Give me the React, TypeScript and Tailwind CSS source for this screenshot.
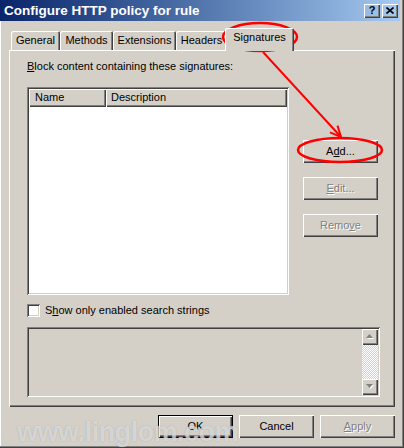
import React from "react";

const raised =
  "shadow-[inset_1px_1px_#ffffff,inset_-1px_-1px_#404040,inset_-2px_-2px_#808080]";
const sunken =
  "shadow-[inset_1px_1px_#808080,inset_-1px_-1px_#ffffff,inset_2px_2px_#404040,inset_-2px_-2px_#d4d0c8]";
const dimText = "text-[#808080] [text-shadow:1px_1px_0_#ffffff]";

function Btn({
  children,
  disabled,
  isDefault,
}: {
  children: React.ReactNode;
  disabled?: boolean;
  isDefault?: boolean;
}) {
  if (isDefault) {
    return (
      <div className="w-[75px] h-[23px] border border-black">
        <div className={`w-full h-full flex items-center justify-center ${raised}`}>{children}</div>
      </div>
    );
  }
  return (
    <div
      className={`w-[75px] h-[23px] flex items-center justify-center ${raised} ${disabled ? dimText : ""}`}
    >
      {children}
    </div>
  );
}

function Tab({ label, w, selected }: { label: string; w: string; selected?: boolean }) {
  if (selected) {
    return (
      <div
        className={`${w} h-[23px] -mb-px -ml-[2px] relative z-10 bg-[#d4d0c8] pt-[3px] text-center rounded-t-[2px] shadow-[inset_1px_1px_#ffffff,inset_-1px_0_#404040,inset_-2px_0_#808080]`}
      >
        {label}
      </div>
    );
  }
  return (
    <div
      className={`${w} h-[19px] pt-[3px] text-center rounded-t-[2px] shadow-[inset_1px_1px_#ffffff,inset_-1px_0_#404040,inset_-2px_0_#808080]`}
    >
      {label}
    </div>
  );
}

function Arrow({ up }: { up?: boolean }) {
  return (
    <div className={`w-[16px] h-[16px] flex items-center justify-center ${raised}`}>
      <svg width="8" height="6" viewBox="0 0 8 6">
        {up ? (
          <>
            <path d="M4.5 1 L8 5 L1 5 Z" fill="#ffffff" />
            <path d="M3.5 0 L7 4 L0 4 Z" fill="#808080" />
          </>
        ) : (
          <>
            <path d="M1 1 L8 1 L4.5 5 Z" fill="#ffffff" />
            <path d="M0 0 L7 0 L3.5 4 Z" fill="#808080" />
          </>
        )}
      </svg>
    </div>
  );
}

export default function App() {
  return (
    <div className="relative w-[404px] h-[448px] overflow-hidden bg-[#d4d0c8] pr-[4px] pb-[4px] shadow-[inset_-1px_-1px_#404040,inset_-2px_-2px_#808080,inset_1px_0_#ffffff] font-['Liberation_Sans',Arial,sans-serif] text-[11px] leading-[13px] text-black">
      {/* Title bar */}
      <div className="h-[21px] flex items-center bg-linear-to-r from-[#0a246a] to-[#a6caf0] pl-[4px] pr-[2px]">
        <span className="flex-1 text-white font-bold text-[13.5px]">Configure HTTP policy for rule</span>
        <div className={`w-[16px] h-[14px] flex items-center justify-center font-bold text-[11px] ${raised}`}>?</div>
        <div className={`ml-[2px] w-[16px] h-[14px] flex items-center justify-center ${raised}`}>
          <svg width="8" height="7" viewBox="0 0 8 7">
            <path d="M0.5 0.5 L7.5 6.5 M7.5 0.5 L0.5 6.5" stroke="#000" strokeWidth="1.6" />
          </svg>
        </div>
      </div>

      <div className="pl-[9px] pr-[5px] pt-[7px]">
        {/* Tabs */}
        <div className="flex items-end h-[22px] pl-[2px]">
          <Tab label="General" w="w-[49px]" />
          <Tab label="Methods" w="w-[53px]" />
          <Tab label="Extensions" w="w-[63px]" />
          <Tab label="Headers" w="w-[51px]" />
          <Tab label="Signatures" w="w-[69px]" selected />
        </div>

        {/* Panel */}
        <div className="h-[357px] pt-[10px] pl-[18px] shadow-[inset_1px_1px_#ffffff,inset_-1px_-1px_#404040,inset_-2px_-2px_#808080]">
          <div>
            <span className="underline">B</span>lock content containing these signatures:
          </div>

          <div className="flex mt-[14px]">
            <div className={`w-[262px] h-[208px] bg-white p-[2px] ${sunken}`}>
              <div className="flex h-[18px] bg-[#d4d0c8]">
                <div className={`w-[77px] pl-[6px] pt-[2px] ${raised}`}>Name</div>
                <div className={`flex-1 pl-[5px] pt-[2px] ${raised}`}>Description</div>
              </div>
            </div>
            <div className="ml-[14px] pt-[53px] flex flex-col gap-[14px]">
              <Btn>
                A<span className="underline">d</span>d...
              </Btn>
              <Btn disabled>
                <span className="underline">E</span>dit...
              </Btn>
              <Btn disabled>
                Remo<span className="underline">v</span>e
              </Btn>
            </div>
          </div>

          <div className="flex items-center mt-[9px]">
            <div className={`w-[13px] h-[13px] bg-white ${sunken}`} />
            <span className="ml-[5px]">
              S<span className="underline">h</span>ow only enabled search strings
            </span>
          </div>

          <div className={`mt-[10px] w-[353px] h-[70px] p-[2px] flex justify-end ${sunken}`}>
            <div className="w-[16px] h-full flex flex-col">
              <Arrow up />
              <div className="flex-1 bg-[repeating-conic-gradient(#ffffff_0_25%,#d4d0c8_0_50%)] bg-size-[2px_2px]" />
              <Arrow />
            </div>
          </div>
        </div>

        {/* Dialog buttons */}
        <div className="flex justify-end gap-[6px] mt-[8px]">
          <Btn isDefault>OK</Btn>
          <Btn>Cancel</Btn>
          <Btn disabled>
            <span className="underline">A</span>pply
          </Btn>
        </div>
      </div>

      {/* Watermark */}
      <div className="absolute left-[17px] top-[417px] text-[27px] leading-[30px] font-bold tracking-[-0.5px] text-white/60 [text-shadow:0_0_1px_rgba(110,110,110,0.6)] pointer-events-none">
        www.linglom.com
      </div>

      {/* Red annotations */}
      <svg className="absolute left-0 top-0 pointer-events-none" width="404" height="448" viewBox="0 0 404 448">
        <ellipse cx="260" cy="37" rx="37" ry="14" fill="none" stroke="#ff0000" strokeWidth="2.5" />
        <path d="M263 52 L341 137" stroke="#ff0000" strokeWidth="2" fill="none" />
        <path d="M337.5 125.6 L341 137 L330 132.4" stroke="#ff0000" strokeWidth="2" fill="none" />
        <ellipse cx="340" cy="150" rx="42" ry="12" fill="none" stroke="#ff0000" strokeWidth="2.5" />
      </svg>
    </div>
  );
}
